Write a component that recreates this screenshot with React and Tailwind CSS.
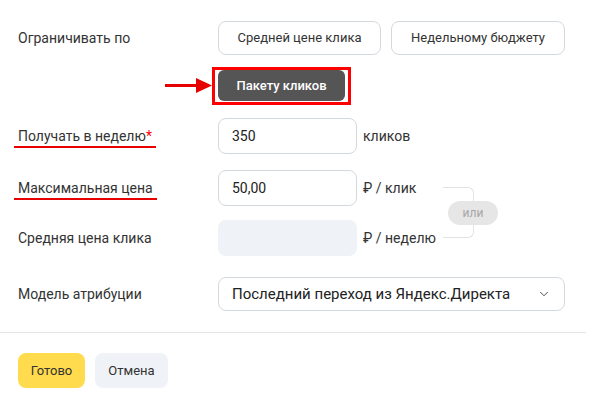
import React from 'react';
import { ChevronDown } from 'lucide-react';

const Label = ({ children, underline, required }) => (
  <div className="w-[200px] shrink-0 text-[14px] text-[#333]">
    <span className="relative">
      {children}
      {required && <span className="text-[#ff0000]">*</span>}
      {underline && <span className="absolute -left-1 -right-1 top-[18px] h-[2px] bg-[#e60000]" />}
    </span>
  </div>
);

const Input = ({ value, disabled }) => (
  <div
    className={`w-[139px] h-[36px] rounded-lg px-[13px] flex items-center text-[14px] text-[#222] ${
      disabled ? 'bg-[#eff2f6]' : 'border border-[#d4d9e0] bg-white'
    }`}
  >
    {value}
  </div>
);

export default function App() {
  return (
    <div className="w-[591px] h-[398px] bg-white font-['Roboto',sans-serif] overflow-hidden">
      <div className="pl-[18px] pr-[26px]">
        <div className="flex items-center pt-[21px]">
          <Label>Ограничивать по</Label>
          <div className="flex gap-[10px]">
            <button className="h-[34px] w-[163px] rounded-lg border border-[#d4d9e0] text-[13px] text-[#333]">
              Средней цене клика
            </button>
            <button className="h-[34px] w-[174px] rounded-lg border border-[#d4d9e0] text-[13px] text-[#333]">
              Недельному бюджету
            </button>
          </div>
        </div>

        <div className="flex items-center mt-[15px]">
          <div className="w-[200px] shrink-0 relative h-[30px]">
            <div className="absolute left-[147px] top-[13px] w-[36px] h-[3px] bg-[#e60000]" />
            <svg className="absolute left-[178px] top-[7px]" width="16" height="15" viewBox="0 0 16 15">
              <polygon points="0,0 16,7.5 0,15" fill="#e60000" />
            </svg>
          </div>
          <div className="relative">
            <button className="h-[31px] w-[127px] rounded-md bg-[#555555] text-white text-[13px] font-medium">
              Пакету кликов
            </button>
            <div className="absolute -left-[6px] -right-[6px] -top-[3px] -bottom-[4px] border-[3px] border-[#ff0000]" />
          </div>
        </div>

        <div className="flex items-center mt-[17px]">
          <Label underline required>Получать в неделю</Label>
          <Input value="350" />
          <span className="ml-[6px] text-[14px] text-[#333]">кликов</span>
        </div>

        <div className="flex mt-[16px]">
          <div className="flex flex-col">
            <div className="flex items-center">
              <Label underline>Максимальная цена</Label>
              <Input value="50,00" />
              <span className="ml-[6px] w-[80px] text-[14px] text-[#333]">₽ / клик</span>
            </div>
            <div className="flex items-center mt-[14px]">
              <Label>Средняя цена клика</Label>
              <Input disabled />
              <span className="ml-[6px] w-[80px] text-[14px] text-[#333]">₽ / неделю</span>
            </div>
          </div>
          <div className="relative w-[60px]">
            <div className="absolute left-0 top-[17px] w-[31px] h-[26px] border-t border-r border-[#e3e3e3] rounded-tr-md" />
            <div className="absolute left-0 top-[55px] w-[31px] h-[13px] border-b border-r border-[#e3e3e3] rounded-br-md" />
            <div className="absolute left-[5px] top-[31px] w-[50px] h-[24px] rounded-full bg-[#e6e6e6] flex items-center justify-center text-[12px] text-[#a6a6a6]">
              или
            </div>
          </div>
        </div>

        <div className="flex items-center mt-[21px]">
          <Label>Модель атрибуции</Label>
          <div className="w-[347px] h-[34px] rounded-lg border border-[#d4d9e0] flex items-center justify-between pl-[13px] pr-[13px] text-[15px] text-[#222]">
            <span>Последний переход из Яндекс.Директа</span>
            <ChevronDown size={14} strokeWidth={1.5} className="text-[#333]" />
          </div>
        </div>
      </div>

      <div className="mt-[21px] w-[586px] h-px bg-[#e5e5e5]" />

      <div className="flex gap-[10px] pl-[18px] mt-[20px]">
        <button className="h-[35px] w-[67px] rounded-lg bg-[#ffdb4d] text-[13px] text-[#333]">Готово</button>
        <button className="h-[35px] w-[73px] rounded-lg bg-[#eff2f6] text-[13px] text-[#333]">Отмена</button>
      </div>
    </div>
  );
}
